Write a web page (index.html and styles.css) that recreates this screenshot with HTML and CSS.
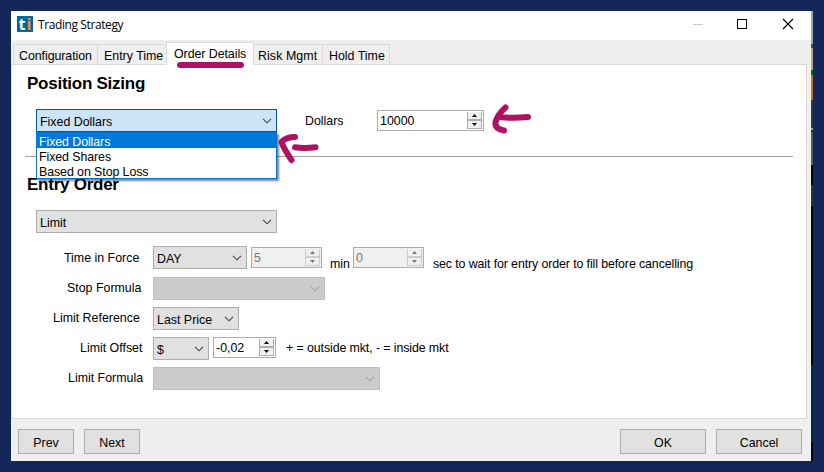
FILE: index.html
```html
<!DOCTYPE html>
<html lang="en">
<head>
    <meta charset="UTF-8">
    <meta name="viewport" content="width=device-width, initial-scale=1.0">
    <title>Trading Strategy</title>
    <link rel="stylesheet" href="styles.css">
</head>
<body>
    <svg width="0" height="0" class="defs">
        <symbol id="chevron" viewBox="0 0 10 6"><path d="M1 0.8 L5 4.8 L9 0.8" fill="none" stroke="currentColor" stroke-width="1.1"/></symbol>
        <symbol id="up" viewBox="0 0 5 3"><path d="M0 3 L2.5 0 L5 3 Z" fill="currentColor"/></symbol>
        <symbol id="down" viewBox="0 0 5 3"><path d="M0 0 L5 0 L2.5 3 Z" fill="currentColor"/></symbol>
    </svg>

    <div class="window">
        <header class="titlebar">
            <div class="logo"><span>t</span><span class="orange">i</span></div>
            <span class="title">Trading Strategy</span>
            <div class="controls">
                <svg width="10" height="10"><path d="M0 5.5H10" stroke="#ccc"/></svg>
                <svg width="10" height="10"><rect x="-0.5" y="0.5" width="9" height="9" fill="none" stroke="#000"/></svg>
                <svg width="10" height="10"><path d="M0 0L10 10M10 0L0 10" stroke="#000" stroke-width="1.1"/></svg>
            </div>
        </header>

        <nav class="tabs">
            <div class="tab config">Configuration</div>
            <div class="tab entry">Entry Time</div>
            <div class="tab active">Order Details</div>
            <div class="tab risk">Risk Mgmt</div>
            <div class="tab hold">Hold Time</div>
        </nav>

        <main class="panel">
            <h2>Position Sizing</h2>
            <div class="row sizing">
                <div class="combo wide open">
                    <span>Fixed Dollars</span>
                    <svg class="chevron"><use href="#chevron"/></svg>
                    <ul class="menu">
                        <li class="selected">Fixed Dollars</li>
                        <li>Fixed Shares</li>
                        <li>Based on Stop Loss</li>
                    </ul>
                </div>
                <span class="dollars">Dollars</span>
                <div class="spin amount">
                    <span>10000</span>
                    <div class="arrows"><i><svg><use href="#up"/></svg></i><i><svg><use href="#down"/></svg></i></div>
                </div>
            </div>
            <hr>
            <h2 class="entry-title">Entry Order</h2>
            <div class="row">
                <div class="combo wide"><span>Limit</span><svg class="chevron"><use href="#chevron"/></svg></div>
            </div>

            <div class="fields">
                <div class="row">
                    <label class="force">Time in Force</label>
                    <div class="combo day"><span>DAY</span><svg class="chevron"><use href="#chevron"/></svg></div>
                    <div class="spin time disabled">
                        <span>5</span>
                        <div class="arrows"><i><svg><use href="#up"/></svg></i><i><svg><use href="#down"/></svg></i></div>
                    </div>
                    <span class="min">min</span>
                    <div class="spin time seconds disabled">
                        <span>0</span>
                        <div class="arrows"><i><svg><use href="#up"/></svg></i><i><svg><use href="#down"/></svg></i></div>
                    </div>
                    <span class="sec">sec to wait for entry order to fill before cancelling</span>
                </div>
                <div class="row">
                    <label class="stop">Stop Formula</label>
                    <div class="combo stop-combo disabled"><svg class="chevron"><use href="#chevron"/></svg></div>
                </div>
                <div class="row">
                    <label class="reference">Limit Reference</label>
                    <div class="combo price"><span>Last Price</span><svg class="chevron"><use href="#chevron"/></svg></div>
                </div>
                <div class="row">
                    <label class="offset">Limit Offset</label>
                    <div class="combo unit"><span>$</span><svg class="chevron"><use href="#chevron"/></svg></div>
                    <div class="spin offset-value">
                        <span>-0,02</span>
                        <div class="arrows"><i><svg><use href="#up"/></svg></i><i><svg><use href="#down"/></svg></i></div>
                    </div>
                    <span class="hint">+ = outside mkt, - = inside mkt</span>
                </div>
                <div class="row">
                    <label class="formula">Limit Formula</label>
                    <div class="combo formula-combo disabled"><svg class="chevron"><use href="#chevron"/></svg></div>
                </div>
            </div>
        </main>

        <footer class="buttons">
            <button type="button">Prev</button>
            <button type="button">Next</button>
            <button type="button" class="large ok">OK</button>
            <button type="button" class="large">Cancel</button>
        </footer>
    </div>
    <div class="edge"></div>

    <svg class="marks" width="824" height="472">
        <path d="M180 65H241"/>
        <path d="M295 137Q286 137 281.500 142Q284 149 291.500 160M295 147.300Q304 148.500 315.500 147.300"/>
        <path d="M505.500 107.500Q498 114 495.500 122Q494.500 129 504 130.500M500 117Q512 118.500 528 117"/>
    </svg>
</body>
</html>
```

FILE: styles.css
```css
* {
    box-sizing: border-box;
}

body {
    margin: 0;
    padding: 11px 0 0 11px;
    width: 824px;
    height: 472px;
    overflow: hidden;
    display: flex;
    align-items: flex-start;
    background-color: #15265a;
    font-family: "Liberation Sans", Arial, sans-serif;
    font-size: 12.4px;
    color: #000;
    white-space: nowrap;
}

.defs {
    position: absolute;
}

.window {
    width: 800px;
    height: 450px;
    background-color: #efefef;
    display: flex;
    flex-direction: column;
}

.titlebar {
    height: 29px;
    background-color: #fff;
    display: flex;
    align-items: center;
    padding: 0 18px 3px 6px;
}

.logo {
    width: 16px;
    height: 16px;
    background-color: #04689b;
    color: #fff;
    font: bold 16px/16px "Open Sans", sans-serif;
    display: flex;
    justify-content: center;
    gap: 1px;
}

.logo .orange {
    color: #f7941d;
}

.title {
    margin-left: 5px;
    font-family: "Open Sans", sans-serif;
    font-size: 12px;
    letter-spacing: -0.4px;
}

.controls {
    margin-left: auto;
    display: flex;
    gap: 35px;
}

.controls svg {
    display: block;
    overflow: visible;
}

.tabs {
    height: 24px;
    padding-left: 2px;
    display: flex;
    align-items: flex-end;
}

.tab {
    height: 20px;
    border: 1px solid #d9d9d9;
    border-bottom: none;
    border-left: none;
    padding-left: 6px;
    line-height: 22px;
}

.tab.config {
    width: 85px;
    border-left: 1px solid #d9d9d9;
    padding-left: 5px;
    letter-spacing: -0.06px;
}

.tab.entry {
    width: 68px;
    border-right: none;
}

.tab.active {
    width: 88px;
    height: 23px;
    margin-bottom: -1px;
    padding-left: 7px;
    border-left: 1px solid #d9d9d9;
    background-color: #fff;
    line-height: 22px;
    letter-spacing: -0.06px;
    position: relative;
}

.tab.risk {
    width: 69px;
    padding-left: 4px;
    letter-spacing: 0.08px;
}

.tab.hold {
    width: 67px;
}

.panel {
    width: 796px;
    height: 355px;
    border: 1px solid #d9d9d9;
    background-color: #fff;
}

h2 {
    margin: 0;
    padding: 9px 0 0 15px;
    height: 44px;
    font-size: 17px;
    line-height: 20px;
    letter-spacing: -0.25px;
}

.row {
    display: flex;
    padding-left: 24px;
}

.combo {
    height: 23px;
    border: 1px solid #adadad;
    background-color: #e1e1e1;
    padding: 2px 4px 0 3px;
    display: flex;
    justify-content: space-between;
    line-height: 21px;
    position: relative;
}

.chevron {
    width: 10px;
    height: 6px;
    margin: 6px 0 0 auto;
    color: #444;
}

.wide {
    width: 241px;
}

.open {
    border-color: #00579c;
    background-color: #cce4f7;
}

.menu {
    position: absolute;
    left: -1px;
    top: 22px;
    width: 241px;
    margin: 0;
    padding: 0;
    list-style: none;
    border: 1px solid #0078d7;
    background-color: #fff;
    box-shadow: 2px 2px 2px rgba(0, 0, 0, 0.5);
    letter-spacing: -0.08px;
    z-index: 1;
}

.menu li {
    height: 15px;
    padding-left: 2px;
    line-height: 19px;
}

.menu .selected {
    background-color: #0078d7;
    color: #fff;
}

.combo.disabled {
    border-color: #bfbfbf;
    background-color: #ccc;
}

.disabled .chevron {
    color: #a0a0a0;
}

.spin {
    height: 21px;
    border: 1px solid #adadad;
    background-color: #fff;
    padding: 0 1px 0 2px;
    display: flex;
    justify-content: space-between;
    line-height: 21px;
}

.arrows {
    width: 15px;
    padding-top: 1px;
}

.arrows i {
    display: flex;
    align-items: center;
    justify-content: center;
    height: 8px;
    border: 1px solid #adadad;
    border-top: none;
    background-color: #f0f0f0;
}

.arrows i + i {
    border-top: 1px solid #adadad;
    height: 9px;
}

.arrows svg {
    width: 5px;
    height: 3px;
}

.spin.disabled {
    background-color: #f0f0f0;
    color: #777;
}

.spin.disabled i {
    border-color: #ccc;
}

.dollars {
    margin-left: 28px;
    width: 72px;
    line-height: 24px;
}

.amount {
    width: 107px;
    margin-top: 1px;
}

hr {
    width: 768px;
    height: 1px;
    margin: 23px 0 0 13px;
    border: none;
    background-color: #a0a0a0;
}

.entry-title {
    height: 53px;
    padding-top: 18px;
}

.fields {
    margin-top: 14px;
    display: flex;
    flex-direction: column;
    gap: 7px;
}

.fields .row {
    height: 24px;
    margin-bottom: -1px;
}

label {
    width: 117px;
    line-height: 22px;
}

.force {
    padding-left: 28px;
}

.stop {
    padding-left: 31px;
}

.reference {
    padding-left: 17px;
}

.offset {
    padding-left: 44px;
}

.formula {
    padding-left: 32px;
}

.day {
    width: 94px;
    margin-top: -1px;
}

.time {
    width: 71px;
    margin-left: 4px;
}

.min {
    width: 23px;
    margin-left: 8px;
    line-height: 35px;
}

.seconds {
    margin-left: 0;
}

.sec {
    margin-left: 9px;
    line-height: 35px;
    letter-spacing: -0.11px;
}

.stop-combo {
    width: 172px;
}

.price {
    width: 86px;
}

.unit {
    width: 56px;
}

.offset-value {
    width: 63px;
    margin-left: 4px;
}

.hint {
    margin-left: 10px;
    line-height: 23px;
    letter-spacing: -0.1px;
}

.formula-combo {
    width: 227px;
}

.buttons {
    display: flex;
    padding: 10px 9px 0 7px;
    gap: 10px;
}

button {
    width: 56px;
    height: 25px;
    padding: 2px 0 0;
    border: 1px solid #adadad;
    background-color: #e1e1e1;
    font: inherit;
    color: #000;
}

button.large {
    width: 86px;
}

button.ok {
    margin-left: auto;
}

/* sliver of the chart behind the dialog */
.edge {
    width: 2px;
    height: 450px;
    background: linear-gradient(to bottom, #a5a5a5 0 33px, #2a5578 33px 37px, #c0a080 37px 59px, #006b00 59px 64px, #c87010 64px 89px, #273a40 89px 117px, #b0b060 117px 119px, #203030 119px 121px, #4a6050 121px 154px, #050505 154px 174px, #333 174px 195px, #050505 195px 354px, #06283f 354px 431px, #050505 431px);
}

.marks {
    position: absolute;
    left: 0;
    top: 0;
    z-index: 2;
    fill: none;
    stroke: #b01263;
    stroke-width: 6;
    stroke-linecap: round;
    stroke-linejoin: round;
}
```
